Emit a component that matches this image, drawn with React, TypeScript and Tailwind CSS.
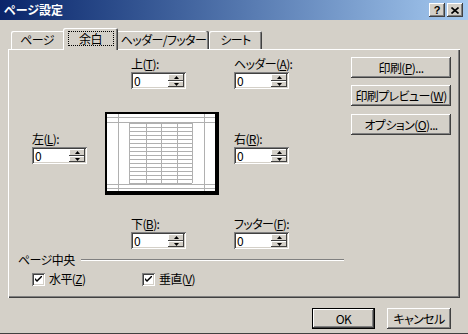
import React from "react";

const raised =
  "shadow-[inset_-1px_-1px_#404040,inset_1px_1px_#ffffff,inset_-2px_-2px_#808080]";
const raisedSmall = "shadow-[inset_-1px_-1px_#404040,inset_1px_1px_#ffffff]";
const sunken =
  "shadow-[inset_1px_1px_#808080,inset_-1px_-1px_#ffffff,inset_2px_2px_#404040,inset_-2px_-2px_#d4d0c8]";

function U({ c }: { c: string }) {
  return <span className="underline underline-offset-[1px]">{c}</span>;
}

function Spin({ label }: { label: React.ReactNode }) {
  return (
    <div className="flex flex-col w-[55px]">
      <div className="h-[14px] leading-[14px] whitespace-nowrap">{label}</div>
      <div className={`mt-[1px] h-[17px] w-[55px] bg-white flex p-[2px] ${sunken}`}>
        <div className="flex-1 pl-[1px] leading-[13px]">0</div>
        <div className="w-[16px] flex flex-col">
          <div className={`h-[7px] bg-[#d4d0c8] flex items-center justify-center ${raisedSmall}`}>
            <svg width="5" height="3" viewBox="0 0 5 3">
              <path d="M2.5 0 L5 3 L0 3Z" fill="#000" />
            </svg>
          </div>
          <div className={`h-[6px] bg-[#d4d0c8] flex items-center justify-center ${raisedSmall}`}>
            <svg width="5" height="3" viewBox="0 0 5 3">
              <path d="M0 0 L5 0 L2.5 3Z" fill="#000" />
            </svg>
          </div>
        </div>
      </div>
    </div>
  );
}

function Btn({
  children,
  w,
  def,
}: {
  children: React.ReactNode;
  w: string;
  def?: boolean;
}) {
  if (def) {
    return (
      <div className={`${w} h-[21px] border border-black bg-[#d4d0c8]`}>
        <div className={`w-full h-full flex items-center justify-center ${raised}`}>{children}</div>
      </div>
    );
  }
  return (
    <div className={`${w} h-[21px] bg-[#d4d0c8] flex items-center justify-center ${raised}`}>
      {children}
    </div>
  );
}

function Check({ label }: { label: React.ReactNode }) {
  return (
    <div className="flex items-center">
      <div className={`w-[13px] h-[13px] bg-white flex items-center justify-center ${sunken}`}>
        <svg width="7" height="7" viewBox="0 0 7 7">
          <path d="M0 2 L0 4 L2 6 L7 1 L7 -1 L2 4Z" fill="#000" />
        </svg>
      </div>
      <div className="ml-[4px] leading-[14px]">{label}</div>
    </div>
  );
}

function Preview() {
  const rows: number[] = [];
  for (let y = 11; y <= 71; y += 4) rows.push(y);
  const cols = [24, 41, 56, 72, 87];
  return (
    <svg width="114" height="83" viewBox="0 0 114 83" className="block">
      <rect x="0" y="0" width="114" height="83" fill="#000" />
      <rect x="2" y="2" width="108" height="77" fill="#fff" />
      <g stroke="#b0b0b0" strokeWidth="1" shapeRendering="crispEdges">
        <line x1="13.5" y1="2" x2="13.5" y2="79" />
        <line x1="99.5" y1="2" x2="99.5" y2="79" />
        <line x1="2" y1="5.5" x2="110" y2="5.5" />
        <line x1="2" y1="10.5" x2="110" y2="10.5" />
        <line x1="2" y1="72.5" x2="110" y2="72.5" />
        <line x1="2" y1="76.5" x2="110" y2="76.5" />
        {rows.map((y) => (
          <line key={y} x1="24" y1={y + 0.5} x2="87" y2={y + 0.5} />
        ))}
        {cols.map((x) => (
          <line key={x} x1={x + 0.5} y1="11" x2={x + 0.5} y2="71" />
        ))}
      </g>
    </svg>
  );
}

export default function App() {
  return (
    <div className="w-[468px] h-[334px] bg-[#d4d0c8] flex flex-col text-[12px] text-black font-['Noto_Sans_CJK_JP','Noto_Sans',sans-serif] [font-feature-settings:'palt'] border-b border-b-[#404040] overflow-hidden">
      {/* title bar */}
      <div className="h-[20px] bg-linear-to-r from-[#0a246a] to-[#a6caf0] flex items-center pl-[4px] pr-[5px]">
        <div className="text-white font-bold leading-[14px] text-[12px]">ページ設定</div>
        <div className="flex-1" />
        <div className={`w-[16px] h-[14px] bg-[#d4d0c8] flex items-center justify-center ${raised}`}>
          <span className="font-bold text-[11px] leading-[11px] font-['Liberation_Sans',sans-serif]">?</span>
        </div>
        <div className={`ml-[2px] w-[16px] h-[14px] bg-[#d4d0c8] flex items-center justify-center ${raised}`}>
          <svg width="8" height="7" viewBox="0 0 8 7">
            <path d="M0.5 0.5 L7.5 6.5 M7.5 0.5 L0.5 6.5" stroke="#000" strokeWidth="1.6" />
          </svg>
        </div>
      </div>

      <div className="flex flex-col tracking-[-0.6px]">
        {/* tabs */}
        <div className="pt-[8px] flex items-end h-[29px] pl-[11px]">
          <div className="w-[52px] h-[18px] flex items-center justify-center rounded-tl-[2px] shadow-[inset_1px_1px_#ffffff]">
            ページ
          </div>
          <div className="relative z-10 -mb-[1px] w-[55px] h-[22px] bg-[#d4d0c8] flex items-center justify-center rounded-t-[2px] shadow-[inset_1px_1px_#ffffff,inset_-1px_0_#404040,inset_-2px_0_#808080]">
            <div className="w-[46px] h-[15px] border border-dotted border-black flex items-center justify-center leading-[13px] mb-[1px]">
              余白
            </div>
          </div>
          <div className="w-[91px] h-[18px] flex items-center justify-center rounded-tr-[2px] shadow-[inset_-1px_0_#404040,inset_-2px_0_#808080,inset_0_1px_#ffffff] whitespace-nowrap">
            ヘッダー/フッター
          </div>
          <div className="w-[53px] h-[18px] flex items-center justify-center rounded-t-[2px] shadow-[inset_1px_1px_#ffffff,inset_-1px_0_#404040,inset_-2px_0_#808080]">
            シート
          </div>
        </div>

        {/* panel */}
        <div className="ml-[8px] w-[452px] h-[249px] flex pt-[8px] shadow-[inset_1px_1px_#ffffff,inset_-1px_-1px_#404040,inset_-2px_-2px_#808080]">
          <div className="w-[343px] flex flex-col">
            <div className="flex pl-[123px] gap-[48px]">
              <Spin label={<>上(<U c="T" />):</>} />
              <Spin label={<>ヘッダー(<U c="A" />):</>} />
            </div>
            <div className="flex items-start mt-[23px] pl-[24px]">
              <div className="mt-[20px]">
                <Spin label={<>左(<U c="L" />):</>} />
              </div>
              <div className="ml-[18px]">
                <Preview />
              </div>
              <div className="ml-[15px] mt-[20px]">
                <Spin label={<>右(<U c="R" />):</>} />
              </div>
            </div>
            <div className="flex pl-[123px] gap-[48px] mt-[22px]">
              <Spin label={<>下(<U c="B" />):</>} />
              <Spin label={<>フッター(<U c="F" />):</>} />
            </div>
            <div className="flex items-center mt-[4px] pl-[10px] w-[336px]">
              <div className="leading-[14px]">ページ中央</div>
              <div className="flex-1 ml-[6px] h-[2px] border-t border-t-[#808080] border-b border-b-white" />
            </div>
            <div className="flex mt-[5px] pl-[24px]">
              <div className="w-[110px]">
                <Check label={<>水平(<U c="Z" />)</>} />
              </div>
              <Check label={<>垂直(<U c="V" />)</>} />
            </div>
          </div>
          <div className="flex flex-col">
            <Btn w="w-[100px]">
              印刷(<U c="P" />)...
            </Btn>
            <div className="mt-[7px]">
              <Btn w="w-[100px]">
                印刷プレビュー(<U c="W" />)
              </Btn>
            </div>
            <div className="mt-[8px]">
              <Btn w="w-[100px]">
                オプション(<U c="O" />)...
              </Btn>
            </div>
          </div>
        </div>

        {/* bottom buttons */}
        <div className="flex justify-end pr-[17px] mt-[10px] gap-[12px]">
          <Btn w="w-[63px]" def>
            OK
          </Btn>
          <Btn w="w-[64px]">キャンセル</Btn>
        </div>
      </div>
    </div>
  );
}
